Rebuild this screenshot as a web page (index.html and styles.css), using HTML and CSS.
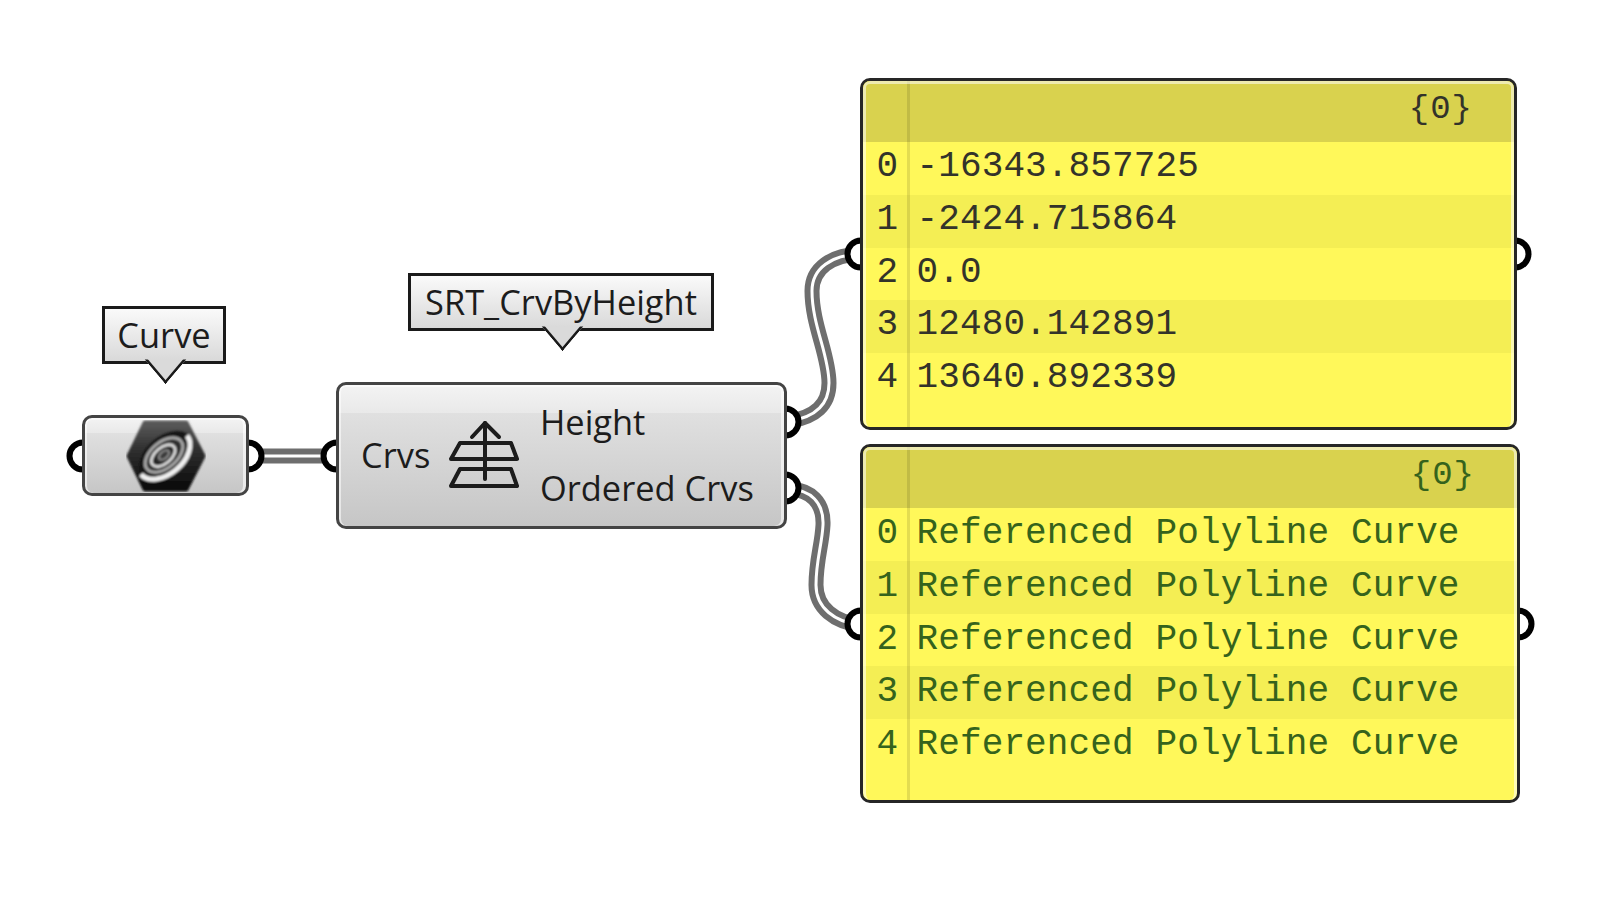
FILE: index.html
```html
<!DOCTYPE html>
<html lang="en">
<head>
<meta charset="utf-8">
<title>SRT_CrvByHeight</title>
<link rel="stylesheet" href="styles.css">
</head>
<body>
<main class="canvas">
  <svg class="wires" viewBox="0 0 1617 901" width="1617" height="901" aria-hidden="true">
    <g class="wire-outer">
      <path d="M249 456H336"/>
      <path d="M790 421C815 417 829 405 829 383C829 355 812 325 812 291C812 268 832 255 860 254"/>
      <path d="M790 489C810 490 824 502 823 525C822 545 816 560 816 585C816 608 835 622 860 625"/>
    </g>
    <g class="wire-inner">
      <path d="M249 456H336"/>
      <path d="M790 421C815 417 829 405 829 383C829 355 812 325 812 291C812 268 832 255 860 254"/>
      <path d="M790 489C810 490 824 502 823 525C822 545 816 560 816 585C816 608 835 622 860 625"/>
    </g>
    <g class="ports">
      <circle cx="83" cy="456" r="13.5"/>
      <circle cx="248" cy="456" r="13.5"/>
      <circle cx="337" cy="456" r="13.5"/>
      <circle cx="785" cy="422" r="13.5"/>
      <circle cx="785" cy="488" r="13.5"/>
      <circle cx="861" cy="254" r="13.5"/>
      <circle cx="1515" cy="254" r="13.5"/>
      <circle cx="861" cy="624" r="13.5"/>
      <circle cx="1518" cy="624" r="13.5"/>
    </g>
  </svg>

  <div class="tip tip-curve">Curve</div>
  <div class="tip tip-srt">SRT_CrvByHeight</div>

  <div class="node node-curve">
    <svg class="hex" viewBox="0 0 80 72" width="80" height="72" aria-hidden="true">
      <defs>
        <linearGradient id="hexfill" x1="0" y1="0" x2="0" y2="1">
          <stop offset="0" stop-color="#5a5a5a"/>
          <stop offset=".4" stop-color="#303030"/>
          <stop offset="1" stop-color="#0a0a0a"/>
        </linearGradient>
        <filter id="soft" x="-10%" y="-10%" width="120%" height="120%"><feGaussianBlur stdDeviation=".8"/></filter>
      </defs>
      <g filter="url(#soft)">
        <path class="hex-body" d="M19 3H60L77 36L60 69H19L3 36Z"/>
        <g transform="translate(38 35) rotate(-40)">
          <ellipse class="disc-base" cx="1" cy="2" rx="31" ry="20"/>
          <path class="crescent" d="M-30 0A30 19 0 0 0 30 0"/>
          <ellipse class="ring-b" cx="0" cy="0" rx="22" ry="13"/>
          <ellipse class="ring-c" cx="-1" cy="0" rx="14" ry="8"/>
          <ellipse class="ring-d" cx="0" cy="0" rx="6" ry="3.5"/>
        </g>
      </g>
    </svg>
  </div>

  <div class="node node-srt">
    <span class="in-label">Crvs</span>
    <svg class="srt-icon" viewBox="0 0 74 72" width="74" height="72" aria-hidden="true">
      <defs>
        <filter id="soft2" x="-10%" y="-10%" width="120%" height="120%"><feGaussianBlur stdDeviation=".5"/></filter>
      </defs>
      <g class="srt-strokes" filter="url(#soft2)">
        <path d="M38 4V60"/>
        <path d="M25 18L38 4L52 18"/>
        <path d="M13 24H64L70 40H4Z"/>
        <path d="M13 50H64L70 67H4Z"/>
      </g>
    </svg>
    <div class="out-labels">
      <span>Height</span>
      <span>Ordered Crvs</span>
    </div>
  </div>

  <section class="panel panel-a">
    <header class="panel-head">{0}</header>
    <div class="row"><span class="idx">0</span><span class="val">-16343.857725</span></div>
    <div class="row"><span class="idx">1</span><span class="val">-2424.715864</span></div>
    <div class="row"><span class="idx">2</span><span class="val">0.0</span></div>
    <div class="row"><span class="idx">3</span><span class="val">12480.142891</span></div>
    <div class="row"><span class="idx">4</span><span class="val">13640.892339</span></div>
  </section>

  <section class="panel panel-b">
    <header class="panel-head">{0}</header>
    <div class="row"><span class="idx">0</span><span class="val">Referenced Polyline Curve</span></div>
    <div class="row"><span class="idx">1</span><span class="val">Referenced Polyline Curve</span></div>
    <div class="row"><span class="idx">2</span><span class="val">Referenced Polyline Curve</span></div>
    <div class="row"><span class="idx">3</span><span class="val">Referenced Polyline Curve</span></div>
    <div class="row"><span class="idx">4</span><span class="val">Referenced Polyline Curve</span></div>
  </section>
</main>
</body>
</html>
```
FILE: styles.css
```css
* { box-sizing: border-box; }

html, body {
  margin: 0;
  padding: 0;
  background: #fff;
}

.canvas {
  position: relative;
  width: 1617px;
  height: 901px;
  overflow: hidden;
  background: #fff;
  font-family: "Open Sans", "Noto Sans", "Liberation Sans", sans-serif;
  color: #1c1c1c;
}

.wires {
  position: absolute;
  left: 0;
  top: 0;
}

.wire-outer path,
.wire-inner path {
  fill: none;
}
.wire-outer path { stroke: #6e6e6e; stroke-width: 15; }
.wire-inner path { stroke: #fff; stroke-width: 3; }

.ports circle {
  fill: #fff;
  stroke: #000;
  stroke-width: 6;
}

/* tooltips */
.tip {
  position: absolute;
  display: flex;
  align-items: center;
  justify-content: center;
  border: 3px solid #1a1a1a;
  background: linear-gradient(#fafafa, #d9d9d9);
  font-size: 34.4px;
  line-height: 1;
  white-space: nowrap;
}
.tip::after {
  content: "";
  position: absolute;
  left: 50%;
  bottom: -16px;
  width: 32px;
  height: 32px;
  margin-left: -16px;
  background: #dadada;
  border-right: 3px solid #1a1a1a;
  border-bottom: 3px solid #1a1a1a;
  clip-path: polygon(100% 0, 100% 100%, 0 100%);
  transform: scaleX(.85) rotate(45deg);
}
.tip-curve { left: 102px; top: 306px; width: 124px; height: 58px; }
.tip-srt { left: 408px; top: 273px; width: 306px; height: 58px; }

/* components */
.node {
  position: absolute;
  display: flex;
  align-items: center;
  border: 3px solid #444;
  border-radius: 10px;
  background: linear-gradient(#f3f3f3 0, #e9e9e9 20%, #e0e0e0 20%, #c6c6c6 100%);
  box-shadow: inset 2px 0 0 rgba(255,255,255,.55), inset -3px 0 0 rgba(255,255,255,.6), inset 0 2px 0 rgba(255,255,255,.6);
}
.node-curve {
  left: 82px;
  top: 415px;
  width: 167px;
  height: 81px;
  justify-content: center;
}
.node-srt {
  left: 336px;
  top: 382px;
  width: 451px;
  height: 147px;
  padding-left: 22px;
  font-size: 34.4px;
}
.in-label { width: 86px; flex: none; margin-top: -2px; }
.srt-icon { flex: none; margin-top: -1px; }
.out-labels {
  display: flex;
  flex-direction: column;
  margin-left: 19px;
  margin-top: -2px;
  line-height: 66px;
  white-space: nowrap;
}

.hex-body { fill: url(#hexfill); stroke: url(#hexfill); stroke-width: 5; stroke-linejoin: round; }
.disc-base { fill: #161616; }
.crescent { fill: none; stroke: #f0f0f0; stroke-width: 5; }
.ring-b { fill: #2e2e2e; stroke: #a8a8a8; stroke-width: 3; }
.ring-c { fill: #262626; stroke: #dedede; stroke-width: 2.8; }
.ring-d { fill: #3a3a3a; stroke: #8a8a8a; stroke-width: 2; }

.srt-strokes path {
  fill: none;
  stroke: #1a1a1a;
  stroke-width: 4;
  stroke-linejoin: round;
  stroke-linecap: round;
}

/* panels */
.panel {
  position: absolute;
  display: flex;
  flex-direction: column;
  border: 3px solid #262626;
  border-radius: 10px;
  overflow: hidden;
  background: #fff85a;
  font-family: "Liberation Mono", "DejaVu Sans Mono", monospace;
  font-size: 36px;
  color: #33332a;
}
.panel::before {
  content: "";
  position: absolute;
  inset: 0;
  border-radius: 7px;
  border: solid rgba(255,255,255,.55);
  border-width: 3px 3px 0 3px;
  z-index: 1;
}
.panel::after {
  content: "";
  position: absolute;
  top: 0;
  bottom: 0;
  left: 44px;
  width: 3px;
  background: rgba(0,0,0,.11);
}
.panel-a { left: 860px; top: 78px; width: 657px; height: 352px; }
.panel-b { left: 860px; top: 444px; width: 660px; height: 359px; color: #35631c; }

.panel-head {
  flex: none;
  height: 61px;
  padding: 7px 41px 0 0;
  text-align: right;
  font-size: 34px;
  letter-spacing: 1px;
  line-height: 42px;
  background: #d9d24e;
}
.panel-b .panel-head { padding-right: 42px; }

.row {
  flex: none;
  display: flex;
  height: 52.8px;
  line-height: 52.8px;
  white-space: pre;
}
.panel-a .row { line-height: 50.8px; }
.row:nth-of-type(even) { background: #f4ee54; }
.row:nth-of-type(odd) { background: #fff85a; }
.idx { width: 54.5px; text-align: center; flex: none; margin-left: -3px; }
.val { flex: none; margin-left: 2px; letter-spacing: .12px; }
```
